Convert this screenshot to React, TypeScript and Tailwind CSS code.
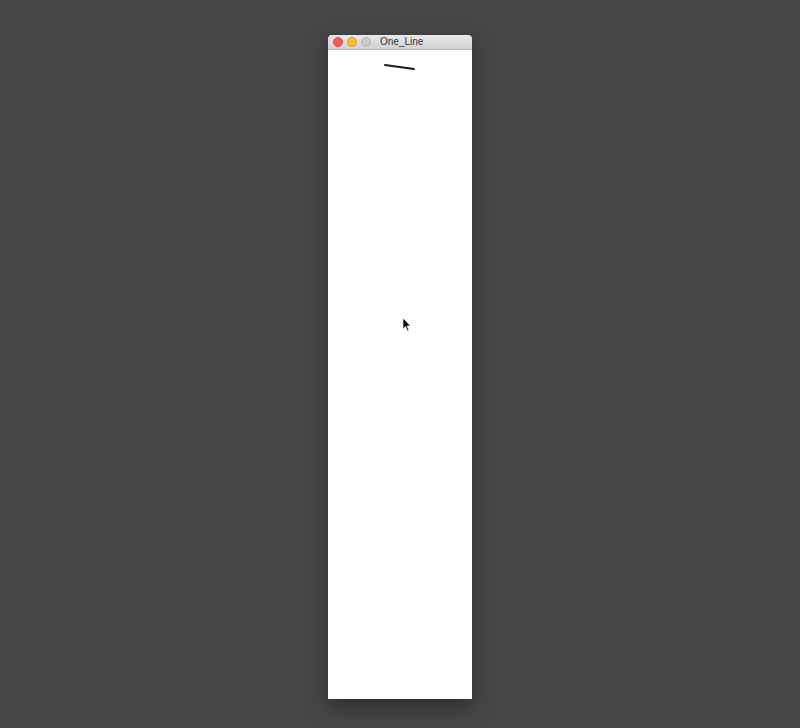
export default function App() {
  return (
    <div className="w-[800px] h-[728px] bg-[#464547] flex flex-col pt-[35px] pl-[328px]" style={{ fontFamily: '"Liberation Sans", Arial, sans-serif' }}>
      <div className="w-[144px] flex flex-col rounded-t-[4px] overflow-hidden shadow-[0_8px_20px_rgba(0,0,0,0.35)]">
        <div className="h-[15px] bg-gradient-to-b from-[#e8e8e8] to-[#d3d3d3] border-b border-[#b5b5b5] flex items-center pl-[5px] gap-[4px]">
          <span className="w-[10px] h-[10px] rounded-full bg-[#fc5b57] border border-[#de4643]"></span>
          <span className="w-[10px] h-[10px] rounded-full bg-[#fdbb2f] border border-[#dea024]"></span>
          <span className="w-[10px] h-[10px] rounded-full bg-[#c8c8c8] border border-[#b8b8b8]"></span>
          <span className="ml-[5px] text-[10px] leading-none text-[#333]">One_Line</span>
        </div>
        <div className="h-[649px] bg-white relative">
          <svg className="absolute left-0 top-0" width="144" height="649" viewBox="0 0 144 649">
            <line x1="57" y1="15" x2="86" y2="19" stroke="#1a1a1a" strokeWidth="1.9" strokeLinecap="round" />
            <path d="M75 268 L75 279 L77.5 276.5 L79.5 281 L81 280.3 L79 276 L82.5 276 Z" fill="#000" stroke="#fff" strokeWidth="0.7" />
          </svg>
        </div>
      </div>
    </div>
  );
}
